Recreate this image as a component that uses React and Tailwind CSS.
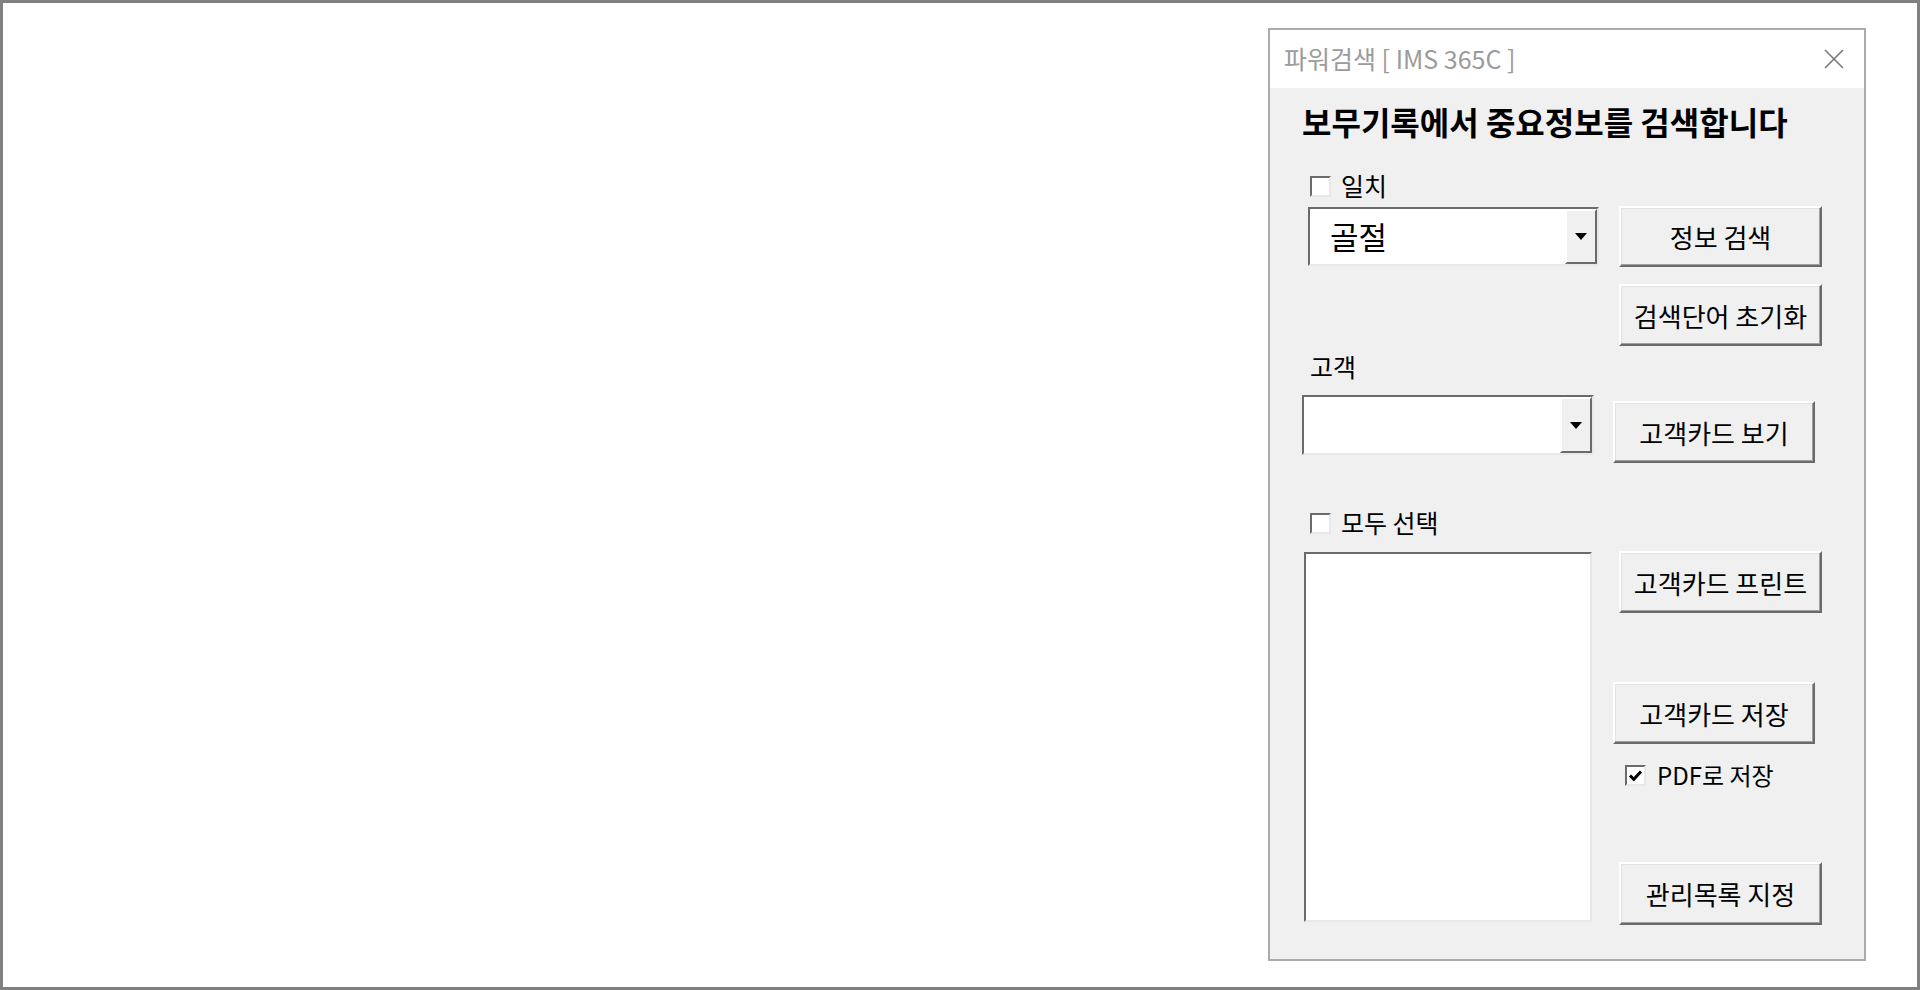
import React from 'react';

const font = { fontFamily: '"Noto Sans CJK KR", "Noto Sans", sans-serif' };

const Btn = ({ children, className = '' }) => (
    <div
        className={`flex items-center justify-center bg-[#f0f0f0] text-[26px] text-black
                    border-2 border-t-white border-l-white border-r-[#6b6b6b] border-b-[#6b6b6b]
                    shadow-[inset_-1px_-1px_0_#a0a0a0,inset_1px_1px_0_#e3e3e3] ${className}`}
    >
        {children}
    </div>
);

const Check = ({ checked }) => (
    <div
        className="w-[21px] h-[21px] bg-white border-2 border-t-[#6b6b6b] border-l-[#6b6b6b]
                   border-r-[#e8e8e8] border-b-[#e8e8e8] flex items-center justify-center"
    >
        {checked && (
            <svg width="15" height="13" viewBox="0 0 15 13">
                <path d="M2 6.5 L5.8 10.3 L13 2.5" stroke="#000" strokeWidth="3" fill="none" />
            </svg>
        )}
    </div>
);

const Combo = ({ value, className = '' }) => (
    <div
        className={`flex bg-white border-2 border-t-[#6b6b6b] border-l-[#6b6b6b]
                    border-r-[#e8e8e8] border-b-[#e8e8e8] ${className}`}
    >
        <div className="flex-1 flex items-center pl-[20px] text-[31px] text-black">{value}</div>
        <div
            className="w-[32px] flex items-center justify-center bg-[#f0f0f0]
                       border-2 border-t-white border-l-white border-r-[#6b6b6b] border-b-[#6b6b6b]"
        >
            <svg width="12" height="7" viewBox="0 0 12 7">
                <path d="M0 0 L12 0 L6 7 Z" fill="#000" />
            </svg>
        </div>
    </div>
);

export default function App() {
    return (
        <div
            style={font}
            className="w-[1920px] h-[990px] bg-white border-[3px] border-[#808080] flex justify-end pr-[51px] pt-[25px] overflow-hidden"
        >
            {/* Dialog */}
            <div className="w-[598px] h-[933px] border-2 border-[#ababab] bg-[#f0f0f0] flex flex-col">
                {/* Title bar */}
                <div className="h-[58px] bg-white flex items-center justify-between pl-[14px] pr-[20px]">
                    <span className="text-[25px] text-[#9b9b9b]">파워검색 [ IMS 365C ]</span>
                    <svg width="20" height="20" viewBox="0 0 20 20">
                        <path d="M1 1 L19 19 M19 1 L1 19" stroke="#777" strokeWidth="1.6" />
                    </svg>
                </div>

                {/* Body */}
                <div className="flex-1 flex flex-col">
                    <div className="pl-[32px] pt-[15px] text-[32px] font-bold text-black leading-[36px]">
                        보무기록에서 중요정보를 검색합니다
                    </div>

                    <div className="flex items-center gap-[10px] ml-[40px] mt-[34px] h-[26px] text-[25px]">
                        <Check />
                        <span>일치</span>
                    </div>

                    <div className="flex items-start mt-[7px]">
                        <Combo value="골절" className="ml-[38px] w-[291px] h-[59px] mt-[1px]" />
                        <Btn className="ml-[20px] w-[203px] h-[61px]">정보 검색</Btn>
                    </div>

                    <Btn className="ml-[349px] mt-[17px] w-[203px] h-[62px]">검색단어 초기화</Btn>

                    <div className="ml-[40px] mt-[5px] h-[30px] text-[25px] leading-[30px]">고객</div>

                    <div className="flex items-start mt-[14px]">
                        <Combo value="" className="ml-[32px] w-[292px] h-[60px]" />
                        <Btn className="ml-[19px] mt-[6px] w-[202px] h-[62px]">고객카드 보기</Btn>
                    </div>

                    <div className="flex items-center gap-[10px] ml-[40px] mt-[47px] h-[26px] text-[25px]">
                        <Check />
                        <span>모두 선택</span>
                    </div>

                    <div className="flex items-start mt-[16px]">
                        <div
                            className="ml-[34px] w-[288px] h-[370px] bg-white border-2 border-t-[#6b6b6b] border-l-[#6b6b6b]
                                       border-r-[#e8e8e8] border-b-[#e8e8e8]"
                        />
                        <div className="flex flex-col ml-[27px] -mt-[1px]">
                            <Btn className="w-[203px] h-[62px]">고객카드 프린트</Btn>
                            <Btn className="-ml-[6px] mt-[69px] w-[202px] h-[62px]">고객카드 저장</Btn>
                            <div className="flex items-center gap-[11px] ml-[6px] mt-[18px] h-[26px] text-[24px]">
                                <Check checked />
                                <span>PDF로 저장</span>
                            </div>
                            <Btn className="mt-[74px] w-[203px] h-[63px]">관리목록 지정</Btn>
                        </div>
                    </div>
                </div>
            </div>
        </div>
    );
}
